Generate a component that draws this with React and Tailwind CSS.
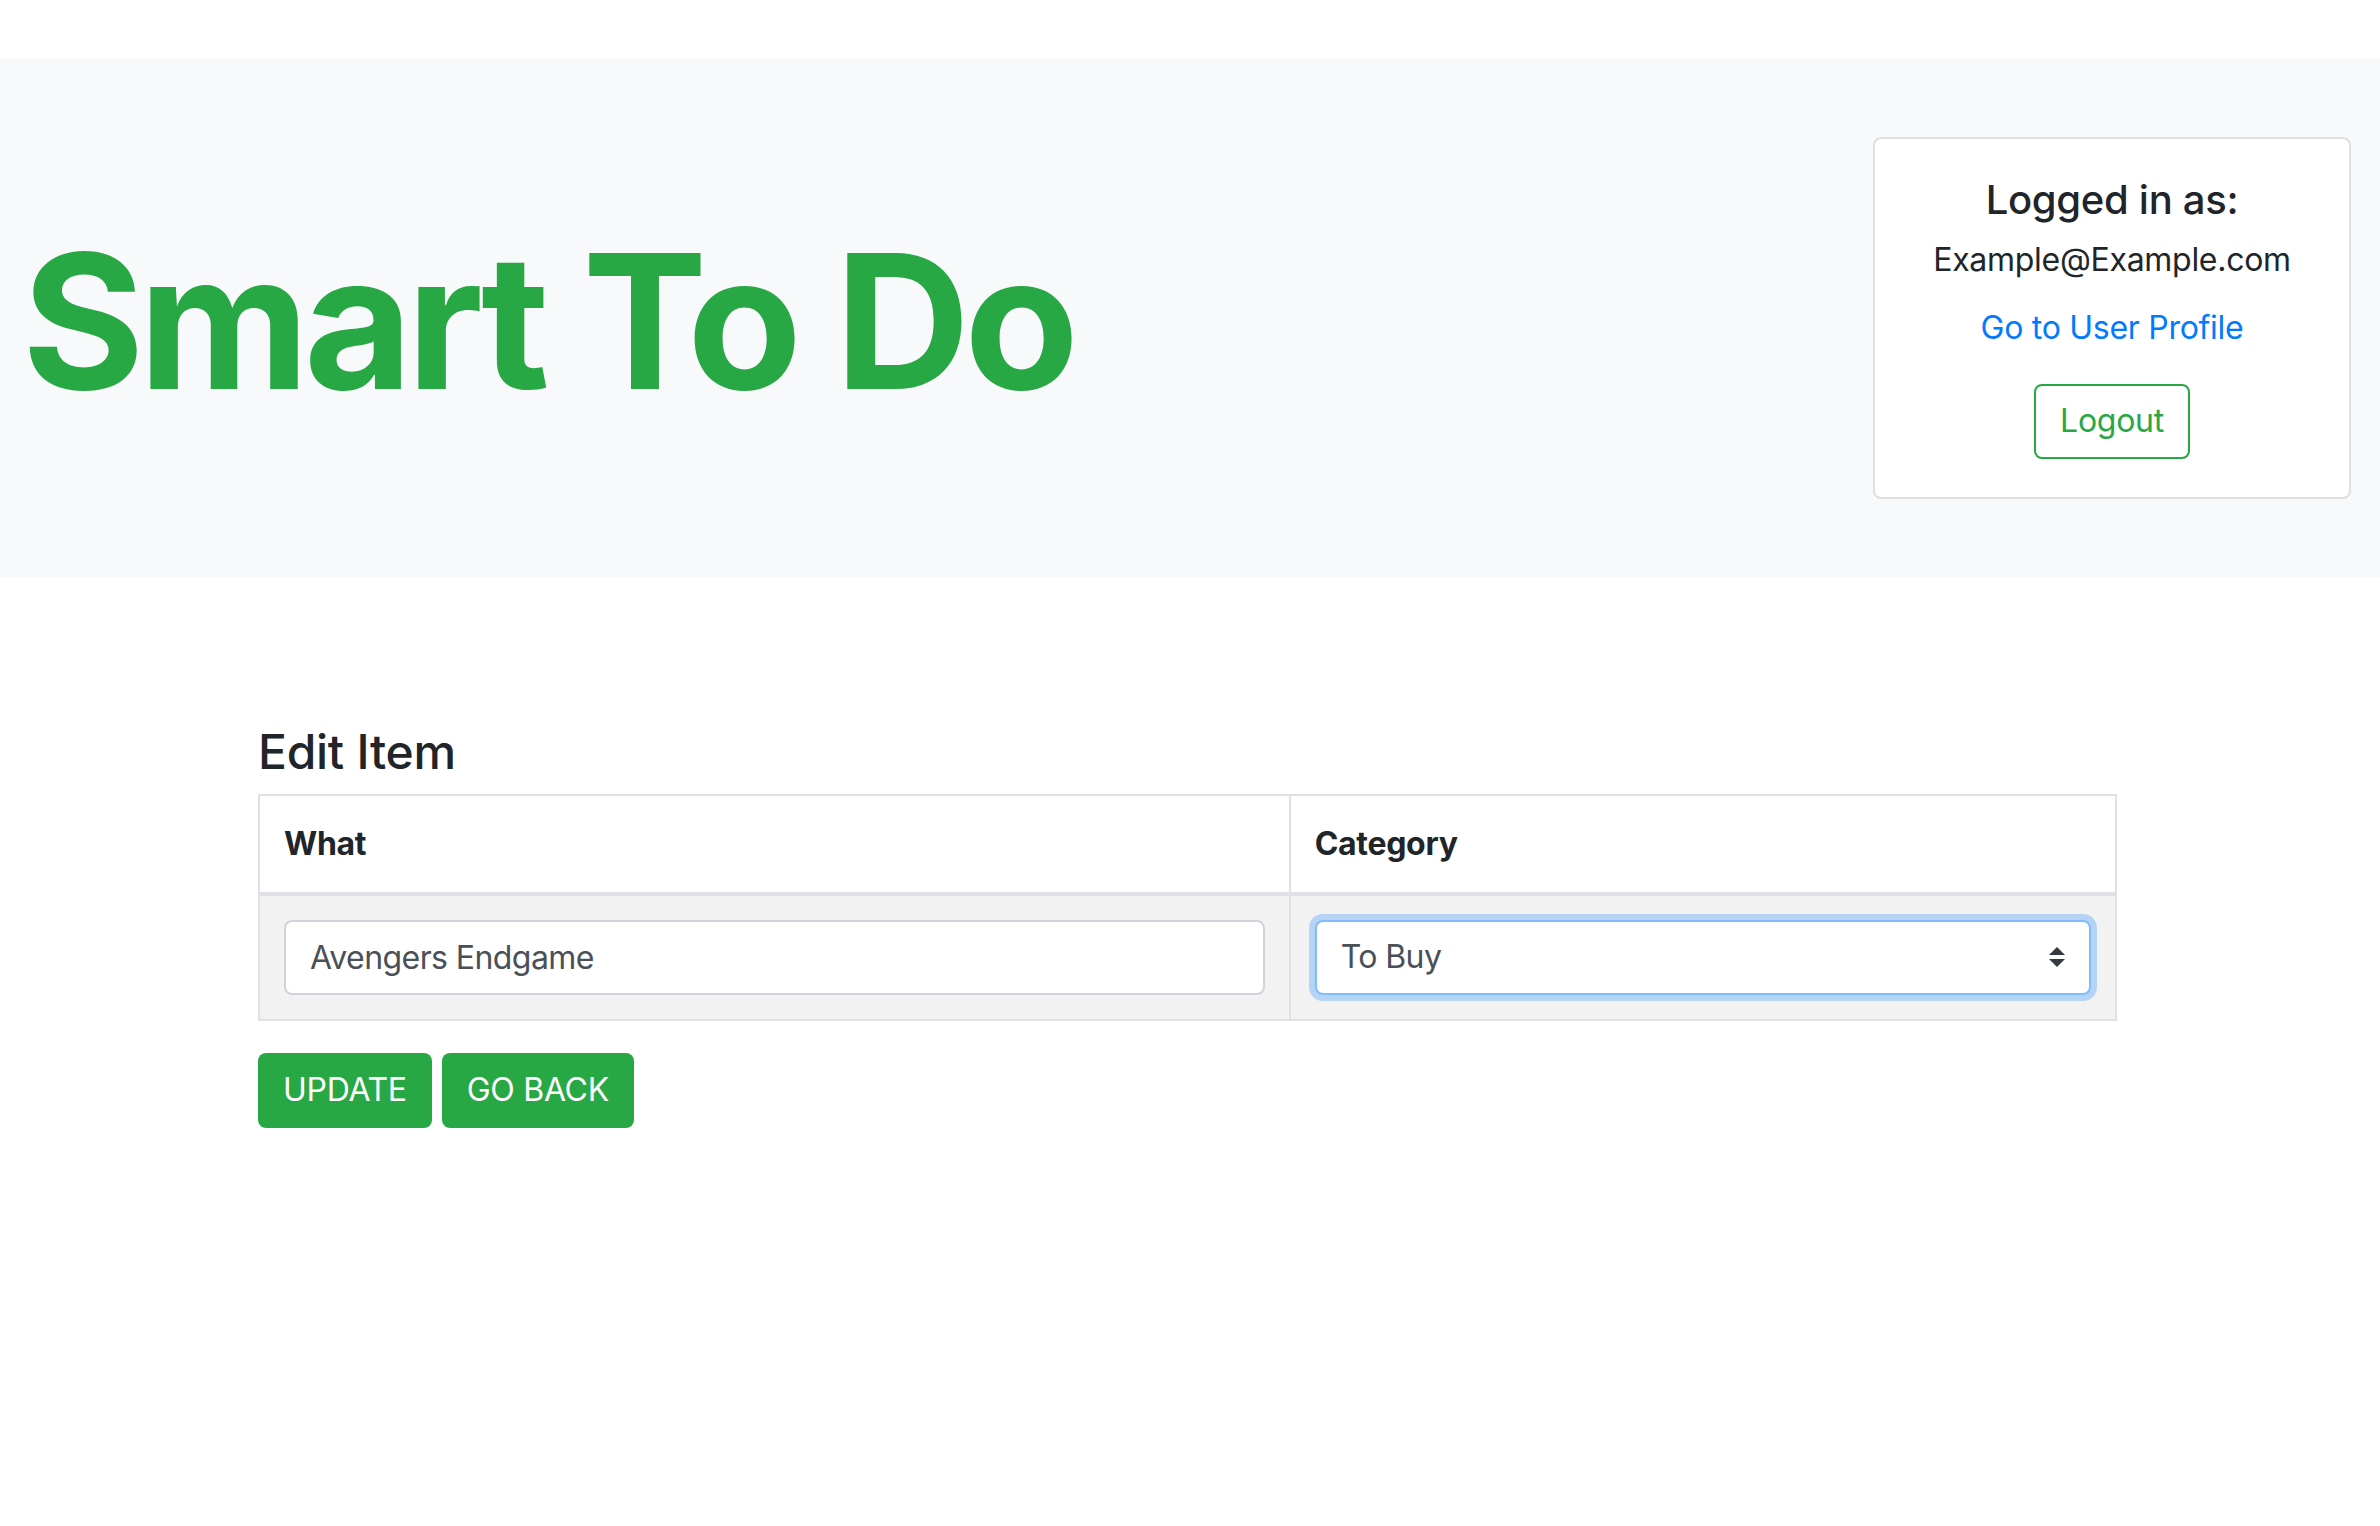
import React from "react";

const sans = { fontFamily: "Inter, 'Noto Sans', sans-serif" };

function SelectArrow() {
  return (
    <svg
      viewBox="0 0 4 5"
      className="pointer-events-none absolute right-[26px] top-1/2 h-[20px] w-[16px] -translate-y-1/2"
    >
      <path fill="#343a40" d="M2 0L0 2h4zm0 5L0 3h4z" />
    </svg>
  );
}

function UserCard() {
  return (
    <div className="flex w-[478px] flex-col items-center rounded-[8px] border-2 border-[#dfdfdf] bg-white pt-[37px] pb-[38px] text-[#212529]">
      <h5 className="text-[40px] font-medium leading-[48px]">Logged in as:</h5>
      <p className="mt-[12px] text-[32px] leading-[48px]">Example@Example.com</p>
      <a href="#" className="mt-[20px] text-[32px] leading-[48px] text-[#007bff]">
        Go to User Profile
      </a>
      <button className="mt-[32px] flex h-[75px] items-center rounded-[8px] border-2 border-[#28a745] px-[24px] text-[32px] leading-[48px] text-[#28a745]">
        Logout
      </button>
    </div>
  );
}

export default function App() {
  return (
    <div className="min-h-screen bg-white pt-[58px] tracking-[-0.018em]" style={sans}>
      {/* header band */}
      <div className="flex h-[519px] items-center justify-between bg-[#f8f9fa] pl-[22px] pr-[29px]">
        <h1 className="mt-[7px] text-[187px] font-bold leading-[1.2] tracking-[-0.03em] text-[#28a745]">
          Smart To Do
        </h1>
        <UserCard />
      </div>

      {/* edit form */}
      <div className="ml-[258px] w-[1859px] text-[#212529]">
        <h4 className="mt-[146px] mb-[13px] text-[48px] font-medium leading-[1.2]">Edit Item</h4>
        <table className="w-full border-collapse border-2 border-[#dee2e6] text-[32px] leading-[48px]">
          <thead>
            <tr>
              <th className="w-[55.5%] border-2 border-b-4 border-[#dee2e6] p-[24px] text-left font-bold">
                What
              </th>
              <th className="border-2 border-b-4 border-[#dee2e6] p-[24px] text-left font-bold">
                Category
              </th>
            </tr>
          </thead>
          <tbody>
            <tr className="bg-[#f2f2f2]">
              <td className="border-2 border-[#dee2e6] p-[24px]">
                <input
                  defaultValue="Avengers Endgame"
                  className="block h-[75px] w-full rounded-[8px] border-2 border-[#ced4da] bg-white px-[24px] text-[32px] tracking-[-0.018em] text-[#495057] outline-none"
                />
              </td>
              <td className="border-2 border-[#dee2e6] p-[24px]">
                <div className="relative">
                  <select
                    defaultValue="buy"
                    className="block h-[75px] w-full appearance-none rounded-[8px] border-2 border-[#80bdff] bg-white px-[24px] text-[32px] tracking-[-0.018em] text-[#495057] shadow-[0_0_0_6px_rgba(0,123,255,0.25)] outline-none"
                  >
                    <option value="buy">To Buy</option>
                    <option value="watch">To Watch</option>
                    <option value="read">To Read</option>
                    <option value="eat">To Eat</option>
                  </select>
                  <SelectArrow />
                </div>
              </td>
            </tr>
          </tbody>
        </table>
        <div className="mt-[32px] flex gap-[10px]">
          <button className="flex h-[75px] items-center rounded-[8px] bg-[#28a745] px-[25px] text-[32px] text-white">
            UPDATE
          </button>
          <button className="flex h-[75px] items-center rounded-[8px] bg-[#28a745] px-[25px] text-[32px] text-white">
            GO BACK
          </button>
        </div>
      </div>
    </div>
  );
}
